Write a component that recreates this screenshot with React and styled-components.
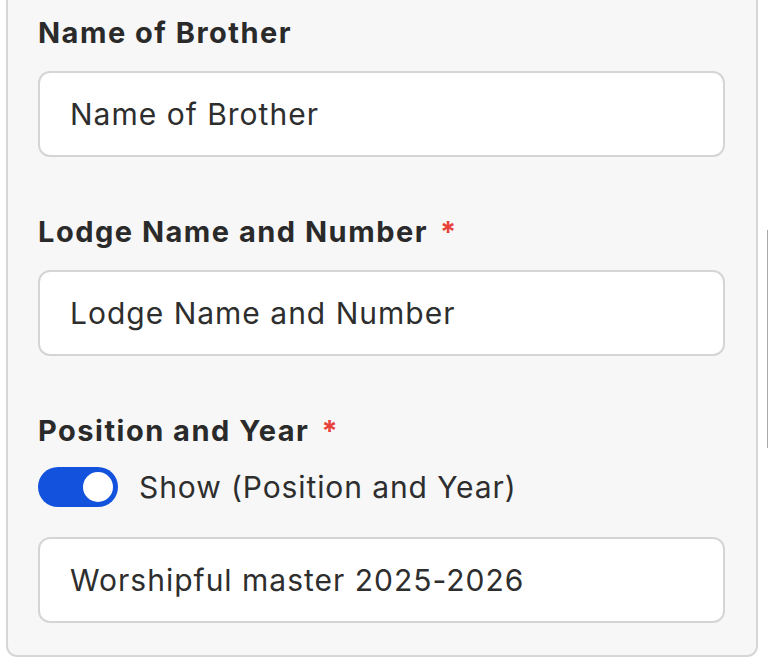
import React, { useState } from "react";
import styled, { createGlobalStyle } from "styled-components";

const Global = createGlobalStyle`
  html, body { margin: 0; padding: 0; background: #ffffff; }
  body {
    font-family: Inter, "Noto Sans", "Liberation Sans", sans-serif;
    overflow: hidden;
  }
  * { box-sizing: border-box; }
`;

const Page = styled.div`
  display: flex;
  align-items: flex-start;
  width: 768px;
  height: 668px;
  padding-left: 6px;
`;

const Panel = styled.section`
  width: 752px;
  background: #f7f7f7;
  border: 2px solid #d6d6d6;
  border-top: none;
  border-radius: 0 0 11px 11px;
  padding: 16px 31px 32px 30px;
  display: flex;
  flex-direction: column;
`;

const Side = styled.div`
  margin-left: 9px;
  margin-top: 230px;
  width: 1px;
  height: 218px;
  background: #a9a9a9;
`;

const Field = styled.div`
  display: flex;
  flex-direction: column;
  & + & {
    margin-top: 58px;
  }
`;

const Label = styled.label`
  font-size: 29px;
  line-height: 34px;
  font-weight: 700;
  letter-spacing: 1.5px;
  color: #2a2a2a;
  margin-bottom: ${(p) => p.$gap || 21}px;
`;

const Required = styled.span`
  color: #e8403a;
  margin-left: 12px;
`;

const Input = styled.input`
  height: 86px;
  width: 100%;
  border: 2px solid #d5d5d5;
  border-radius: 12px;
  background: #ffffff;
  padding: 0 30px;
  font-family: inherit;
  font-size: 30px;
  letter-spacing: 1px;
  color: #2e2e2e;
  outline: none;
  &::placeholder { color: #2e2e2e; opacity: 1; }
`;

const ToggleRow = styled.div`
  display: flex;
  align-items: center;
  gap: 21px;
  margin-bottom: 30px;
`;

const Track = styled.button`
  width: 80px;
  height: 40px;
  border: none;
  border-radius: 20px;
  padding: 0 5px;
  background: ${(p) => (p.$on ? "#1352dc" : "#cfcfcf")};
  display: flex;
  align-items: center;
  justify-content: ${(p) => (p.$on ? "flex-end" : "flex-start")};
  cursor: pointer;
`;

const Knob = styled.span`
  width: 30px;
  height: 30px;
  border-radius: 50%;
  background: #ffffff;
`;

const ToggleText = styled.span`
  font-size: 30px;
  line-height: 36px;
  letter-spacing: 0.9px;
  color: #2e2e2e;
`;

export default function App() {
  const [on, setOn] = useState(true);
  return (
    <>
      <Global />
      <Page>
        <Panel>
          <Field>
            <Label>Name of Brother</Label>
            <Input placeholder="Name of Brother" />
          </Field>
          <Field>
            <Label>
              Lodge Name and Number<Required>*</Required>
            </Label>
            <Input placeholder="Lodge Name and Number" />
          </Field>
          <Field>
            <Label $gap={19}>
              Position and Year<Required>*</Required>
            </Label>
            <ToggleRow>
              <Track $on={on} onClick={() => setOn(!on)}>
                <Knob />
              </Track>
              <ToggleText>Show (Position and Year)</ToggleText>
            </ToggleRow>
            <Input defaultValue="Worshipful master 2025-2026" />
          </Field>
        </Panel>
        <Side />
      </Page>
    </>
  );
}
